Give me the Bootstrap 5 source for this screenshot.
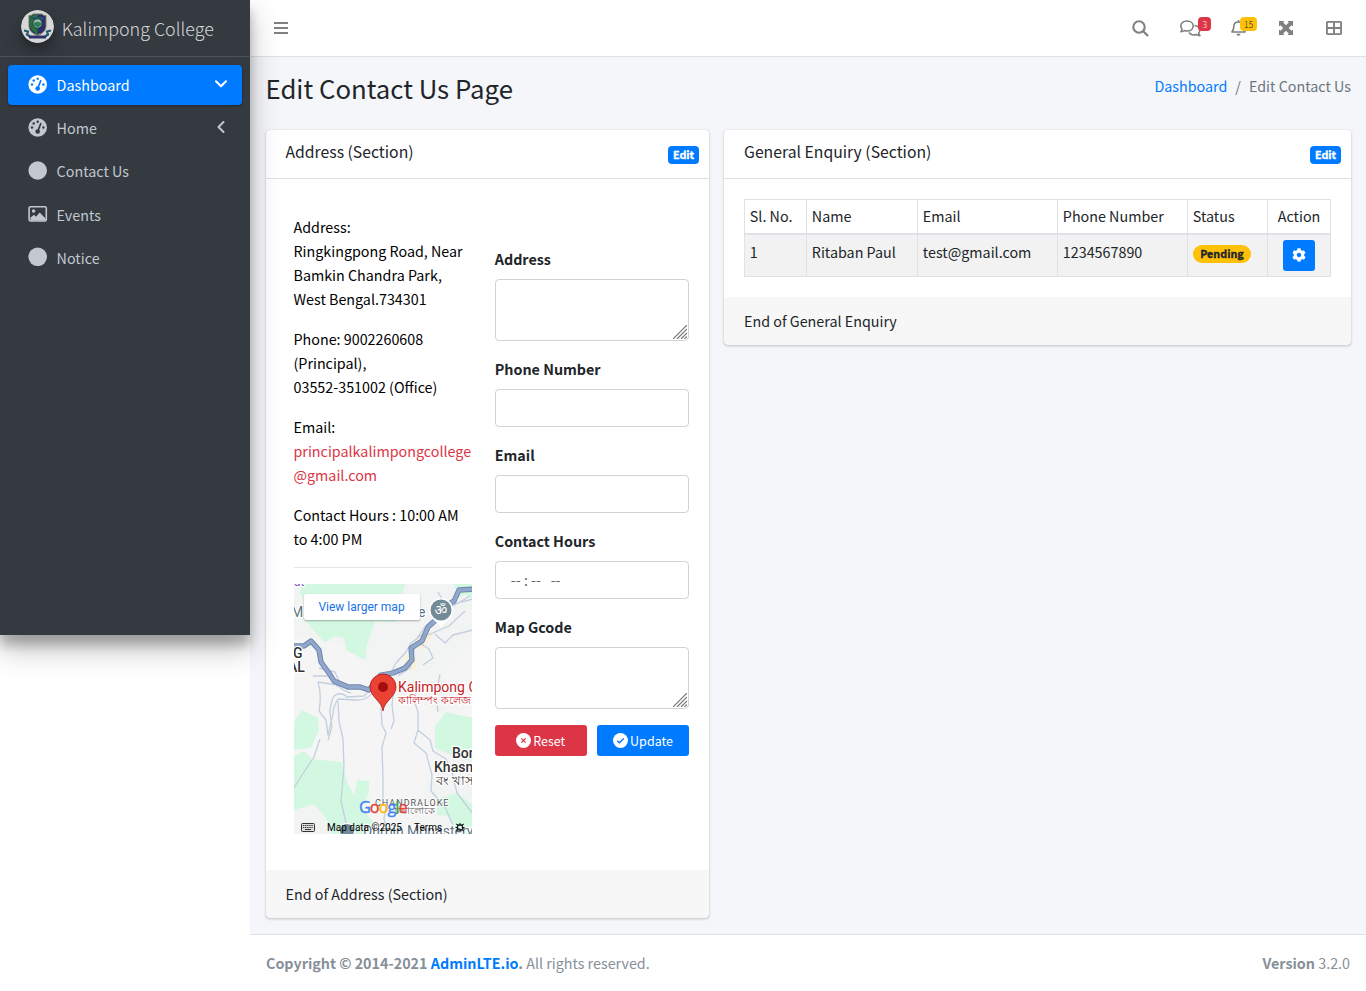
<!DOCTYPE html>
<html lang="en">
<head>
<meta charset="utf-8">
<meta name="viewport" content="width=device-width, initial-scale=1">
<title>Edit Contact Us</title>
<link rel="stylesheet" href="https://cdn.jsdelivr.net/npm/bootstrap@5.3.0/dist/css/bootstrap.min.css">
<style>
:root{--k:.895}
body{font-family:"Noto Sans CJK SC","Open Sans",sans-serif;font-size:calc(16px*var(--k));line-height:24px;color:#212529;background:#fff;overflow:hidden}
svg{display:block;flex:none}
.sidebar{width:250px;height:635px;background:#343a40;box-shadow:0 14px 28px rgba(0,0,0,.25),0 10px 10px rgba(0,0,0,.22);z-index:5}
.brand{height:57px;border-bottom:1px solid #4b545c;padding:0 8px 0 21px;color:rgba(255,255,255,.8);font-weight:300;font-size:calc(20px*var(--k));gap:7.700px}
.brand-logo{width:33px;height:33px;border-radius:50%;box-shadow:0 10px 20px rgba(0,0,0,.19),0 6px 6px rgba(0,0,0,.23);opacity:.8;margin-top:-3px}
.side-item{height:40px;margin-bottom:3.2px;padding:0 16px 0 20px;border-radius:4px;color:#c2c7d0;text-decoration:none}
.side-item.current{background:#007bff;color:#fff;box-shadow:0 1px 3px rgba(0,0,0,.12),0 1px 2px rgba(0,0,0,.24)}
.side-item .glyph{margin:-2px 8.600px 0 0}
.side-item .arrow{margin:-2px 0 0 auto}
.main{height:991px}
.topbar{height:57px;border-bottom:1px solid #dee2e6;background:#fff;color:#808080}
.topbar .tool{width:48.6px;height:56px}
.count{font-size:calc(9.6px*var(--k));line-height:10px;font-weight:300;padding:2px 4.300px;border-radius:4px;top:17px;position:absolute}
.wrap{background:#f4f6f9;height:877px;padding:0 7.500px 0 8px}
.title-row{height:73px;padding:0 7.5px}
.title-row h1{font-size:calc(28.8px*var(--k));line-height:34px;margin:14px 0 0;font-weight:400}
.blue{color:#007bff;text-decoration:none}
.crumbs{color:#6c757d;margin-top:17px}
.g15{--bs-gutter-x:15px}
.panel{border:0;border-radius:4px;box-shadow:0 0 1px rgba(0,0,0,.125),0 1px 3px rgba(0,0,0,.2)}
.panel-head{height:49px;border-bottom:1px solid rgba(0,0,0,.125);padding:9.500px 10px 0 20px;font-size:calc(17.6px*var(--k))}
.panel-foot{height:48px;background:rgba(0,0,0,.03);padding:12px 20px 0}
.tag{font-size:calc(12px*var(--k));line-height:12px;font-weight:700;-webkit-text-stroke:.35px currentColor;padding:3px 4.900px;border-radius:4px;color:#fff;background:#007bff;height:18px}
.info{padding:16px 8px 0;color:#000}
.info p{margin-bottom:16px}
.fields{padding-top:48px}
.fields label{font-weight:700;margin-bottom:8px;display:block}
.fields .form-control{border:1px solid #ced4da;border-radius:4px;height:38px;resize:none;font-size:inherit;padding:6px 12px;display:block}
.fields textarea.form-control{height:62px}
.group{margin-bottom:16px;position:relative}
.grip{position:absolute;right:2px;bottom:2px}
.act{width:92px;height:31px;border-radius:3px;color:#fff;border:0;font-size:calc(14px*var(--k));line-height:21px;gap:2px}
.act svg{margin-top:-1px}
.map{height:250px;overflow:hidden;position:relative}
.maplink{position:absolute;left:10px;top:10px;width:116px;height:26px;background:#fff;border-radius:2px;box-shadow:0 1px 2px rgba(0,0,0,.3);color:#1a73e8;font:12px/26px Roboto,sans-serif;text-align:center;text-decoration:none}
.grid-table{width:587px;table-layout:fixed;border-collapse:collapse;margin:0}
.grid-table th,.grid-table td{border:1px solid #dee2e6;padding:4.8px;font-weight:400;vertical-align:top}
.grid-table th{border-bottom-width:2px;padding-top:4px}
.grid-table td{background:#f2f2f2}
.foot{height:57px;border-top:1px solid #dee2e6;padding:0 16px;color:#869099}
</style>
</head>
<body>
<div class="d-flex align-items-start">
<aside class="sidebar position-relative flex-shrink-0">
  <div class="brand d-flex align-items-center">
    <svg class="brand-logo" viewBox="0 0 33 33"><circle cx="16.500" cy="16.500" r="16.500" fill="#fff"/><path d="M8 5.500q2.500.5 4-1.500h9q1.500 2 4 1.500v11q-.5 6-8.500 9q-8-3-8.500-9z" fill="#2c2b7e" stroke="#8f9158"/><path d="M9 6.500q2-.2 3.500-1.500h4v19q-7-3-7.300-8z" fill="#23803c"/><path d="M10.500 7h12v2.500h-12z" fill="#1d5f6c"/><circle cx="16.500" cy="13.500" r="4.700" fill="#b7dfd0" stroke="#1d3b45"/><path d="M12.300 13l4-1.500 4.500 1.500v1.500l-4 3-4-2z" fill="#2d9260"/><path d="M3 20.500l4 1-1 3 3 2M30 20.500l-4 1 1 3-3 2" stroke="#22617c" stroke-width="2.200" fill="none"/><path d="M8 25.500h17v3H8z" fill="#2c3178"/><path d="M14 23.500l2.500 1.500 2.500-1.500" stroke="#8ca958" fill="none"/></svg>
    <span>Kalimpong College</span>
  </div>
  <nav class="px-2 pt-2">
    <a href="#" class="side-item current d-flex align-items-center"><svg class="glyph" width="20" height="19" viewBox="0 0 20 19"><circle cx="9.700" cy="9.500" r="9.300" fill="currentColor"/><g fill="#007bff"><circle cx="4" cy="9.500" r="1.200"/><circle cx="5.700" cy="5.500" r="1.200"/><circle cx="9.700" cy="3.700" r="1.200"/><circle cx="15.400" cy="9.500" r="1.200"/><circle cx="9.700" cy="13.500" r="2.300"/></g><path d="M9.700 13.500l3-7.800" stroke="#007bff" stroke-width="1.700" stroke-linecap="round"/></svg>Dashboard<svg class="arrow" width="12" height="8" viewBox="0 0 12 8" style="margin-right:-1px"><path d="M1 1.300l5 5 5-5" fill="none" stroke="currentColor" stroke-width="2" stroke-linecap="round" stroke-linejoin="round"/></svg></a>
    <a href="#" class="side-item d-flex align-items-center"><svg class="glyph" width="20" height="19" viewBox="0 0 20 19"><circle cx="9.700" cy="9.500" r="9.300" fill="currentColor"/><g fill="#343a40"><circle cx="4" cy="9.500" r="1.200"/><circle cx="5.700" cy="5.500" r="1.200"/><circle cx="9.700" cy="3.700" r="1.200"/><circle cx="15.400" cy="9.500" r="1.200"/><circle cx="9.700" cy="13.500" r="2.300"/></g><path d="M9.700 13.500l3-7.800" stroke="#343a40" stroke-width="1.700" stroke-linecap="round"/></svg>Home<svg class="arrow" width="8" height="12" viewBox="0 0 8 12" style="margin-right:1.500px"><path d="M6.500 1l-5 5 5 5" fill="none" stroke="currentColor" stroke-width="2" stroke-linecap="round" stroke-linejoin="round"/></svg></a>
    <a href="#" class="side-item d-flex align-items-center"><svg class="glyph" width="20" height="19"><circle cx="9.700" cy="9.500" r="9.300" fill="currentColor"/></svg>Contact Us</a>
    <a href="#" class="side-item d-flex align-items-center"><svg class="glyph" width="20" height="16" viewBox="0 0 20 16"><rect x="1.100" y=".8" width="17.200" height="14.200" rx="1.500" fill="none" stroke="currentColor" stroke-width="1.600"/><circle cx="5.600" cy="5" r="1.800" fill="currentColor"/><path d="M2.500 14.500v-3l3.500-2.700 2 2L11.700 6.500l5.800 6v2z" fill="currentColor"/></svg>Events</a>
    <a href="#" class="side-item d-flex align-items-center"><svg class="glyph" width="20" height="19"><circle cx="9.700" cy="9.800" r="9.300" fill="currentColor"/></svg>Notice</a>
  </nav>
</aside>
<div class="main flex-grow-1">
  <header class="topbar d-flex align-items-center">
    <svg width="14" height="14" style="margin-left:24px"><path d="M0 2h14M0 7h14M0 12h14" stroke="currentColor" stroke-width="1.800"/></svg>
    <div class="d-flex ms-auto">
      <div class="tool d-flex align-items-center justify-content-center" style="padding-right:3px"><svg width="17" height="17" viewBox="0 0 17 17"><circle cx="7" cy="7" r="5.700" fill="none" stroke="currentColor" stroke-width="2.100"/><path d="M11 11l5 5" stroke="currentColor" stroke-width="2.300"/></svg></div>
      <div class="tool position-relative d-flex align-items-center" style="padding-left:14px"><svg width="21" height="17" viewBox="0 0 21 17" fill="none" stroke="currentColor" stroke-width="1.600" stroke-linejoin="round"><path d="M7 1c3.600 0 6.200 2.200 6.200 5s-2.600 5-6.200 5q-1.500 0-2.800-.5Q3 11.500 1 11.600q1-1.200 1-2.600Q.8 7.600.8 6c0-2.800 2.600-5 6.200-5z"/><path d="M14.500 5.500c3 .3 5.200 2.300 5.200 4.700q0 1.500-1 2.700.2 1.500 1.200 2.700-2.300 0-3.600-1.200c-3 1-6 .2-7.300-1.900"/></svg><span class="count text-white bg-danger" style="right:3.500px">3</span></div>
      <div class="tool position-relative d-flex align-items-center ps-3"><svg width="15" height="16" viewBox="0 0 15 16"><path d="M7.500 0v2M2.800 6.500C2.800 3.700 4.900 2 7.500 2s4.700 1.700 4.700 4.500c0 3.200 1 4.200 1.900 5.500H.9c1-1.300 1.900-2.300 1.900-5.500z" fill="none" stroke="currentColor" stroke-width="1.600" stroke-linejoin="round"/><path d="M5.500 13.700h4a2 2 0 0 1-4 0z" fill="currentColor"/></svg><span class="count text-dark bg-warning" style="right:6px">15</span></div>
      <div class="tool d-flex align-items-center justify-content-center" style="width:46px"><svg width="14" height="14" viewBox="0 0 14 14" fill="currentColor"><path d="M0 0h5.500L4.200 1.500 7 4.300l2.800-2.800L8.500 0H14v5.500l-1.500-1.300L9.700 7l2.800 2.800L14 8.500V14H8.500l1.300-1.500L7 9.700l-2.800 2.800L5.500 14H0V8.500l1.500 1.300L4.300 7 1.500 4.200 0 5.500z"/></svg></div>
      <div class="tool d-flex align-items-center justify-content-center"><svg width="16" height="14" viewBox="0 0 16 14" fill="none" stroke="currentColor" stroke-width="1.900"><rect x=".9" y=".9" width="14.200" height="12.200" rx="1.200"/><path d="M8 1v12M1 7h14"/></svg></div>
      <div style="width:8px"></div>
    </div>
  </header>
  <main class="wrap">
    <div class="title-row d-flex justify-content-between">
      <h1>Edit Contact Us Page</h1>
      <div class="crumbs"><a href="#" class="blue">Dashboard</a><span style="padding:0 8px">/</span>Edit Contact Us</div>
    </div>
    <div class="row g15 mx-0">
      <section class="col-5">
        <div class="card panel">
          <div class="panel-head d-flex justify-content-between"><span>Address (Section)</span><span class="tag" style="margin-top:6px">Edit</span></div>
          <div style="padding:20px 20px 36px">
            <div class="row g15">
              <div class="col-6"><div class="info">
                <p>Address:<br>Ringkingpong Road, Near<br>Bamkin Chandra Park,<br>West Bengal.734301</p>
                <p>Phone: 9002260608<br>(Principal),<br>03552-351002 (Office)</p>
                <p>Email:<br><span style="color:#dc3545">principalkalimpongcollege<br>@gmail.com</span></p>
                <p class="mb-0">Contact Hours : 10:00 AM<br>to 4:00 PM</p>
                <div style="height:1px;background:#e5e5e5;margin:16px 0"></div>
                <div class="map">
                  <svg width="179" height="250" viewBox="0 0 179 250">
                    <rect width="179" height="250" fill="#f2f3f3"/>
                    <path d="M0 52L50 60 90 100 150 130 120 250H60L20 190 0 195zM178 60l-30 30 5 50 25 20z" fill="#f5f5f5"/>
                    <path d="M8 0h103l-2 8-9 6 12 14-12 10-19-1-8 24-2 15-19-10-2-12-10-2-9 7-24-27 5-16-6-6zM160 0h19v15l-8-5-6 4zM0 138l8-12 16 8 1 12-8 18-17 2zM0 172l10-5 8 8 30 3 5 20 12 22 14 18-3 12H38l-6-16-12-14-20 6zM63 196l12 1 0 12-10 19-10 6-3-8 8-12zM141 142l11-14 27 6v43l-20-5-18-8zM143 215l20-6 16 12v29h-14l-10-18-12-1z" fill="#d3f8e2"/>
                    <path d="M120 60l10-14 9 4-11 17zM111 70l12 4-2 13-10-5z" fill="#fbf0d8"/>
                    <g fill="none" stroke="#c3cfde" stroke-width="1.300" stroke-linejoin="round">
                      <path d="M83 101q-8 5-13 11l-17 1q-6-6-13-1-4 8-4 17l2 14-4 13M83 104q-9 13-21 12l-18-1q-5 8-5 15l-5 21-2-15-7-9q3-16-1-29l19 3q8 7 14 8M26 155l-6 18-12 18-8 13M44 117l1 20 4 18 1 28-3 34 5 22 12 14M87 123l1 18 4 8-4 14 1 32 0 20 3 8-2 12 5 18M100 101l-2 20 2 16-3 8M123 104l-3 12 4 12 0 18-4 13 12 10 6 22-1 16 14 16 10 23M124 146l12 10 3 11 13 8 6 14 5 20 16 21M146 90l-4 22 2 16M25 84l16 4 4 9 14 8M19 92l15 0 10 11"/>
                      <path d="M121 57l9-13 6-6 10-8 13-8 17-10M129 50l-12 9-5 9-10 11-8 15M138 36l-6 14-11 13-5 21-12 8M134 51l21-9 16-15M141 50l10 9 8-8 20-5M127 60l8 5 4 9-10 7M144 8l8 14 27-7"/>
                    </g>
                    <path d="M0 62h10l7-5 8 9 2 12 10 14 3 5 14 6 12 0 9 3 12-15 12-2 12-5 7-8-1-12 11-7 6-14 8-7 6-12 12-7 5-11 18-1 10-8" fill="none" stroke="#6f86af" stroke-width="5.300" stroke-linejoin="round"/>
                    <path d="M0 62h10l7-5 8 9 2 12 10 14 3 5 14 6 12 0 9 3 12-15 12-2 12-5 7-8-1-12 11-7 6-14 8-7 6-12 12-7 5-11 18-1 10-8" fill="none" stroke="#91a8cc" stroke-width="3.300" stroke-linejoin="round"/>
                    <path d="M138 34h18l-9 9z" fill="#fff"/><circle cx="147" cy="26" r="12" fill="#fff"/><circle cx="147" cy="26" r="10.500" fill="#738b98"/>
                    <text x="147" y="31" font-family="Noto Sans,sans-serif" font-size="14" fill="#fff" text-anchor="middle">ॐ</text>
                    <g font-family="Roboto,sans-serif" font-size="14" stroke="#fff" stroke-width="2.500" paint-order="stroke" stroke-linejoin="round">
                      <text x="-3" y="33" fill="#617380">Ma</text><text x="124" y="33" fill="#617380">e</text>
                      <text x="0" y="2" font-size="12" fill="#7e57c2">at</text>
                      <text x="-1" y="74" fill="#333" font-weight="500">G</text><text x="-6" y="88" fill="#333" font-weight="500">AL</text>
                      <text x="104" y="108" fill="#c5221f">Kalimpong College</text>
                      <text x="104" y="120" font-size="11" fill="#c5221f">কালিম্পং কলেজ</text>
                      <text x="158" y="174" fill="#333" font-weight="500">Bong</text><text x="140" y="188" fill="#333" font-weight="500">Khasmahal</text>
                      <text x="142" y="201" font-size="12.500" fill="#444">বং খাসমহল</text>
                      <text x="100" y="230" font-size="9.500" fill="#666">চন্দ্রালোকে</text>
                      <text x="81" y="221.500" font-size="9" letter-spacing="1" fill="#555" stroke-width="1.500">CHANDRALOKE</text>
                      <circle cx="53" cy="247" r="7" fill="#738b98"/>
                      <text x="69" y="252" fill="#617380">Durpin Monastery</text>
                    </g>
                    <text x="65" y="228.500" font-family="Open Sans,sans-serif" font-size="16.300" font-weight="500" letter-spacing="-1"><tspan fill="#4285f4" stroke="#4285f4" stroke-width=".4">G</tspan><tspan fill="#ea4335" stroke="#ea4335" stroke-width=".4">o</tspan><tspan fill="#fbbc05" stroke="#fbbc05" stroke-width=".4">o</tspan><tspan fill="#4285f4" stroke="#4285f4" stroke-width=".4">g</tspan><tspan fill="#34a853" stroke="#34a853" stroke-width=".4">l</tspan><tspan fill="#ea4335" stroke="#ea4335" stroke-width=".4">e</tspan></text>
                    <path d="M89 127c-1-10-13-14-13-24a13 13 0 0 1 26 0c0 10-12 14-13 24z" fill="#ea4335" stroke="#b31412" stroke-width=".8"/><circle cx="89" cy="103" r="5" fill="#a50e0e"/>
                    <rect x="7.500" y="239.500" width="13" height="8" rx="1" fill="#ddd" stroke="#333"/><path d="M9 241.500h10M9 243.500h10" stroke="#333" stroke-dasharray="1.300 .8"/><path d="M11 245.500h6" stroke="#333"/>
                    <g font-family="Roboto,sans-serif" font-size="10" fill="#000"><text x="33" y="247">Map data ©2025</text><text x="120" y="247">Terms</text></g>
                    <rect x="163.500" y="241" width="5" height="5" rx="1.500" fill="none" stroke="#111" stroke-width="1.300"/><path d="M161.500 243.500h2m5 0h2M162 240l2 1m4 5l2 1M162 247l2-1m4-5l2-1M166 239v2" stroke="#111"/>
                  </svg>
                  <a href="#" class="maplink">View larger map</a>
                </div>
              </div></div>
              <div class="col-6"><form class="fields">
                <div class="group"><label>Address</label><textarea class="form-control"></textarea><svg class="grip" width="14" height="14"><path d="M0 14L14 0M4 14L14 4M8 14l6-6M11.500 14l2.500-2.500" stroke="#777" stroke-width="1.200"/></svg></div>
                <div class="group"><label>Phone Number</label><input class="form-control"></div>
                <div class="group"><label>Email</label><input class="form-control"></div>
                <div class="group"><label>Contact Hours</label><div class="form-control" style="padding:7px 0 0 15px;color:#666;white-space:pre">-- : --   --</div></div>
                <div class="group"><label>Map Gcode</label><textarea class="form-control"></textarea><svg class="grip" width="14" height="14"><path d="M0 14L14 0M4 14L14 4M8 14l6-6M11.500 14l2.500-2.500" stroke="#777" stroke-width="1.200"/></svg></div>
                <div class="d-flex justify-content-between">
                  <button type="button" class="act d-flex align-items-center justify-content-center p-0" style="background:#dc3545"><svg width="15" height="15" viewBox="0 0 14 14"><circle cx="7" cy="7" r="7" fill="#fff"/><path d="M5 5l4 4M9 5l-4 4" stroke="#dc3545" stroke-width="1.200"/></svg><span style="margin-top:-1px">Reset</span></button>
                  <button type="button" class="act d-flex align-items-center justify-content-center p-0" style="background:#007bff"><svg width="15" height="15" viewBox="0 0 14 14"><circle cx="7" cy="7" r="7" fill="#fff"/><path d="M4 7.200l2 2 4-4" fill="none" stroke="#007bff" stroke-width="1.300"/></svg><span style="margin-top:-1px">Update</span></button>
                </div>
              </form></div>
            </div>
          </div>
          <div class="panel-foot">End of Address (Section)</div>
        </div>
      </section>
      <section class="col-7">
        <div class="card panel">
          <div class="panel-head d-flex justify-content-between"><span>General Enquiry (Section)</span><span class="tag" style="margin-top:6px">Edit</span></div>
          <div style="padding:20px">
            <table class="grid-table">
              <colgroup><col style="width:62px"><col style="width:111px"><col style="width:140px"><col style="width:130px"><col style="width:80px"><col style="width:63px"></colgroup>
              <thead><tr><th>Sl. No.</th><th>Name</th><th>Email</th><th>Phone Number</th><th>Status</th><th class="text-center">Action</th></tr></thead>
              <tbody><tr style="height:43px"><td>1</td><td>Ritaban Paul</td><td>test@gmail.com</td><td>1234567890</td><td><span class="tag d-inline-block rounded-pill bg-warning text-dark" style="padding:3px 7.400px">Pending</span></td><td><button type="button" class="act d-flex align-items-center justify-content-center mx-auto p-0" style="width:32px;background:#007bff"><svg width="14" height="14" viewBox="0 0 512 512"><path fill="#fff" d="M487.400 315.700l-42.600-24.600c4.300-23.200 4.300-47 0-70.200l42.600-24.600c4.900-2.800 7.100-8.600 5.500-14-11.100-35.600-30-67.800-54.700-94.600-3.800-4.100-10-5.100-14.800-2.300L380.800 110c-17.900-15.400-38.500-27.300-60.800-35.100V25.800c0-5.600-3.900-10.500-9.400-11.700-36.700-8.200-74.300-7.800-109.200 0-5.500 1.200-9.400 6.100-9.400 11.700V75c-22.200 7.900-42.800 19.800-60.800 35.100L88.700 85.500c-4.900-2.800-11-1.900-14.800 2.300-24.700 26.700-43.600 58.900-54.700 94.600-1.700 5.400.6 11.200 5.500 14L67.300 221c-4.300 23.200-4.300 47 0 70.200l-42.600 24.600c-4.900 2.800-7.100 8.600-5.500 14 11.100 35.600 30 67.800 54.700 94.600 3.800 4.100 10 5.100 14.800 2.300l42.600-24.600c17.900 15.400 38.500 27.300 60.800 35.100v49.200c0 5.600 3.900 10.500 9.400 11.700 36.700 8.200 74.300 7.800 109.200 0 5.500-1.200 9.400-6.100 9.400-11.700v-49.200c22.200-7.900 42.800-19.800 60.800-35.100l42.600 24.600c4.900 2.800 11 1.900 14.800-2.300 24.700-26.700 43.600-58.900 54.700-94.600 1.500-5.500-.7-11.300-5.600-14.100zM256 336c-44.100 0-80-35.900-80-80s35.900-80 80-80 80 35.900 80 80-35.900 80-80 80z"/></svg></button></td></tr></tbody>
            </table>
          </div>
          <div class="panel-foot">End of General Enquiry</div>
        </div>
      </section>
    </div>
  </main>
  <footer class="foot d-flex align-items-center justify-content-between"><div><strong>Copyright © 2014-2021 <a href="#" class="blue">AdminLTE.io</a>.</strong> All rights reserved.</div><div><strong>Version</strong> 3.2.0</div></footer>
</div>
</div>
<script src="https://cdn.jsdelivr.net/npm/bootstrap@5.3.0/dist/js/bootstrap.bundle.min.js"></script>
</body>
</html>
